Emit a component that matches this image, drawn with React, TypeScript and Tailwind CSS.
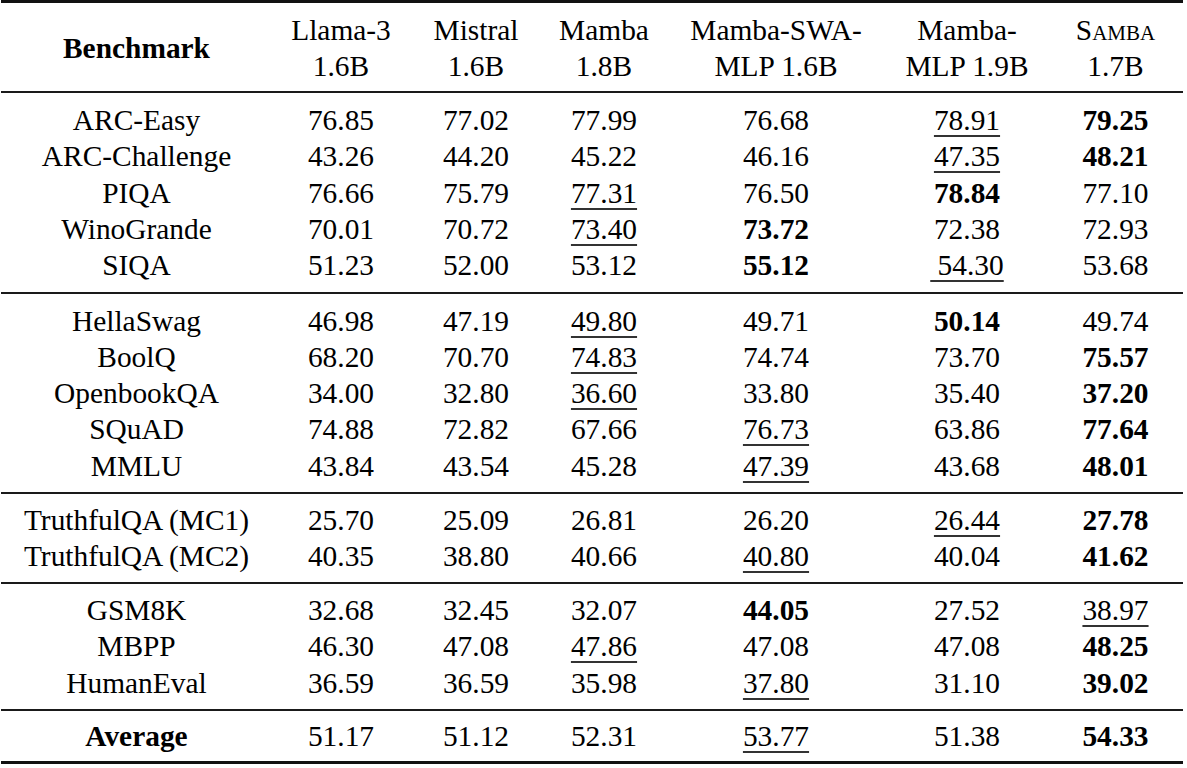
// Benchmark comparison table: SAMBA vs. baselines.
// Cell marks: "b:" bold (best), "u:" underlined (second best).

const COLS = "grid grid-cols-[271px_138px_132px_124px_220px_162px_135px]";

const SECTIONS: string[][][] = [
  [
    ["ARC-Easy", "76.85", "77.02", "77.99", "76.68", "u:78.91", "b:79.25"],
    ["ARC-Challenge", "43.26", "44.20", "45.22", "46.16", "u:47.35", "b:48.21"],
    ["PIQA", "76.66", "75.79", "u:77.31", "76.50", "b:78.84", "77.10"],
    ["WinoGrande", "70.01", "70.72", "u:73.40", "b:73.72", "72.38", "72.93"],
    ["SIQA", "51.23", "52.00", "53.12", "b:55.12", "u:\u00a054.30", "53.68"],
  ],
  [
    ["HellaSwag", "46.98", "47.19", "u:49.80", "49.71", "b:50.14", "49.74"],
    ["BoolQ", "68.20", "70.70", "u:74.83", "74.74", "73.70", "b:75.57"],
    ["OpenbookQA", "34.00", "32.80", "u:36.60", "33.80", "35.40", "b:37.20"],
    ["SQuAD", "74.88", "72.82", "67.66", "u:76.73", "63.86", "b:77.64"],
    ["MMLU", "43.84", "43.54", "45.28", "u:47.39", "43.68", "b:48.01"],
  ],
  [
    ["TruthfulQA (MC1)", "25.70", "25.09", "26.81", "26.20", "u:26.44", "b:27.78"],
    ["TruthfulQA (MC2)", "40.35", "38.80", "40.66", "u:40.80", "40.04", "b:41.62"],
  ],
  [
    ["GSM8K", "32.68", "32.45", "32.07", "b:44.05", "27.52", "u:38.97"],
    ["MBPP", "46.30", "47.08", "u:47.86", "47.08", "47.08", "b:48.25"],
    ["HumanEval", "36.59", "36.59", "35.98", "u:37.80", "31.10", "b:39.02"],
  ],
];

// vertical padding per block, tuned to the rule positions
const SECTION_PAD = [
  "pt-[9px] pb-[8.75px]",
  "pt-[8.5px] pb-[8.25px]",
  "pt-[8px] pb-[7.5px]",
  "pt-[8px] pb-[8.25px]",
];

const AVERAGE = ["b:Average", "51.17", "51.12", "52.31", "u:53.77", "51.38", "b:54.33"];

function Cell({ value }: { value: string }) {
  if (value.startsWith("b:")) {
    return <span className="font-bold">{value.slice(2)}</span>;
  }
  if (value.startsWith("u:")) {
    return (
      <span className="underline decoration-[1.5px] decoration-[#333] underline-offset-[5px]">
        {value.slice(2)}
      </span>
    );
  }
  return <span>{value}</span>;
}

function Row({ cells }: { cells: string[] }) {
  return (
    <div className={`${COLS} h-[36.25px] leading-[36.25px] whitespace-nowrap text-center`}>
      {cells.map((c, i) => (
        <div key={i}>
          <Cell value={c} />
        </div>
      ))}
    </div>
  );
}

const HEADERS: [React.ReactNode, string][] = [
  ["Llama-3", "1.6B"],
  ["Mistral", "1.6B"],
  ["Mamba", "1.8B"],
  ["Mamba-SWA-", "MLP 1.6B"],
  ["Mamba-", "MLP 1.9B"],
  [<span className="[font-variant:small-caps]">Samba</span>, "1.7B"],
];

export default function App() {
  return (
    <div className="min-h-screen bg-white text-black font-['Liberation_Serif',serif] text-[29.4px]">
      <div className="ml-px w-[1182px]">
        <div className="h-[3px] bg-[#111]" />
        <div className={`${COLS} pt-[9px] pb-[7px] text-center leading-[36px]`}>
          <div className="flex items-center justify-center font-bold">Benchmark</div>
          {HEADERS.map(([top, bottom], i) => (
            <div key={i} className="flex flex-col">
              <span>{top}</span>
              <span>{bottom}</span>
            </div>
          ))}
        </div>
        <div className="h-[2px] bg-[#1a1a1a]" />
        {SECTIONS.map((rows, s) => (
          <div key={s}>
            <div className={SECTION_PAD[s]}>
              {rows.map((r) => (
                <Row key={r[0]} cells={r} />
              ))}
            </div>
            <div className="h-[2px] bg-[#1a1a1a]" />
          </div>
        ))}
        <div className="pt-[7px] pb-[6.75px]">
          <Row cells={AVERAGE} />
        </div>
        <div className="h-[3px] bg-[#111]" />
      </div>
    </div>
  );
}
